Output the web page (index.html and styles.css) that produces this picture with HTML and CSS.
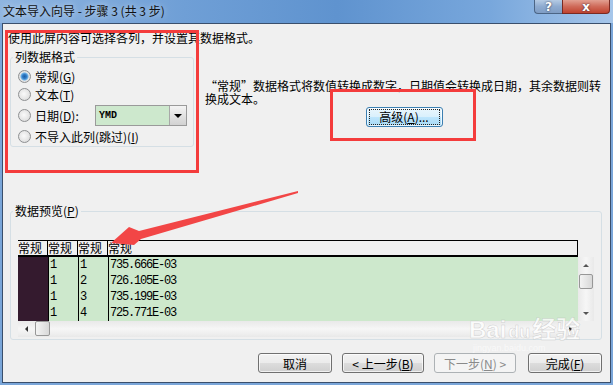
FILE: index.html
```html
<!DOCTYPE html>
<html lang="zh-CN">
<head>
<meta charset="UTF-8">
<title>文本导入向导 - 步骤 3 (共 3 步)</title>
<link rel="stylesheet" href="styles.css">
</head>
<body>
<div class="window">
  <div class="titlebar">
    <span class="title">文本导入向导 - 步骤 3 (共 3 步)</span>
    <div class="caption-btns">
      <span class="cap-help">?</span>
      <span class="cap-close">x</span>
    </div>
  </div>

  <div class="client">
    <p class="intro">使用此屏内容可选择各列，并设置其数据格式。</p>

    <div class="top-row">
      <fieldset class="group format-group">
        <legend>列数据格式</legend>
        <label class="radio-row"><span class="radio checked"></span>常规(<u>G</u>)</label>
        <label class="radio-row"><span class="radio"></span>文本(<u>T</u>)</label>
        <label class="radio-row date-row"><span class="radio"></span>日期(<u>D</u>):
          <span class="combo"><span class="combo-text">YMD</span><span class="combo-btn"><i class="tri-down"></i></span></span>
        </label>
        <label class="radio-row"><span class="radio"></span>不导入此列(跳过)(<u>I</u>)</label>
      </fieldset>

      <div class="desc">
        <p>“常规”数据格式将数值转换成数字，日期值会转换成日期，其余数据则转换成文本。</p>
        <button class="btn btn-focus"><span class="focus-rect">高级(<u>A</u>)...</span></button>
      </div>
    </div>

    <fieldset class="group preview-group">
      <legend>数据预览(<u>P</u>)</legend>
      <div class="grid-head">
        <span>常规</span><span>常规</span><span>常规</span><span>常规</span>
      </div>
      <div class="grid-row">
        <div class="grid-body">
          <span class="sel"></span><span>1</span><span>1</span><span>735.666E-03</span>
          <span class="sel"></span><span>1</span><span>2</span><span>726.105E-03</span>
          <span class="sel"></span><span>1</span><span>3</span><span>735.199E-03</span>
          <span class="sel"></span><span>1</span><span>4</span><span>725.771E-03</span>
        </div>
        <div class="vscroll">
          <span class="sb-arrow"><i class="tri-up"></i></span>
          <span class="thumb"></span>
          <span class="sb-fill"></span>
          <span class="sb-arrow"><i class="tri-down small"></i></span>
        </div>
      </div>
      <div class="hscroll">
        <span class="sb-arrow"><i class="tri-left"></i></span>
        <span class="thumb"></span>
        <span class="sb-fill"></span>
        <span class="sb-arrow"><i class="tri-right"></i></span>
      </div>
    </fieldset>

    <div class="buttons">
      <button class="btn btn-short">取消</button>
      <button class="btn">&lt; 上一步(<u>B</u>)</button>
      <button class="btn" disabled>下一步(<u>N</u>) &gt;</button>
      <button class="btn btn-short btn-last">完成(<u>F</u>)</button>
    </div>

    <!-- annotations drawn over the dialog -->
    <div class="mark mark-format"></div>
    <div class="mark mark-advanced"></div>
    <svg class="arrow" width="607" height="358" viewBox="0 0 607 358">
      <polygon points="295,167 136,207 126,203 108,219 131,221 138,215 295,169" fill="#f24646"/>
    </svg>
    <div class="watermark">Bai<span class="paw">du</span>经验<span class="wm-url">jingyan.baidu.com</span></div>
  </div>
</div>
</body>
</html>
```

FILE: styles.css
```css
body {
  margin: 0;
  font-family: "Noto Sans CJK SC", "DejaVu Sans", sans-serif;
  font-size: 12px;
  color: #000;
}

.window {
  width: 613px;
  height: 385px;
  background-color: #7aa6d9;
  display: flex;
  flex-direction: column;
}

.titlebar {
  height: 23px;
  display: flex;
  justify-content: space-between;
  background: linear-gradient(to right, #8fb5e0, #6f9fd6 30%, #5f93cf 55%, #78a7dc 80%, #a6c6ea);
}

.title {
  padding: 3px 0 0 3px;
  line-height: 16px;
  color: #111;
  text-shadow: 0 0 6px rgba(255, 255, 255, 0.7);
}

.caption-btns {
  display: flex;
  height: 14px;
  margin-right: 3px;
}

.cap-help,
.cap-close {
  display: flex;
  justify-content: center;
  align-items: center;
  color: #fff;
  font-family: "DejaVu Sans", sans-serif;
  font-weight: bold;
  font-size: 12px;
  line-height: 14px;
  border: 1px solid #4b6585;
  border-top: none;
  text-shadow: 0 0 2px #223;
}

.cap-help {
  width: 27px;
  border-right: none;
  border-radius: 0 0 0 4px;
  background: linear-gradient(#b5cbe4, #8eabd0 50%, #7f9dc4);
}

.cap-close {
  width: 46px;
  border-color: #7a2a22;
  border-radius: 0 0 4px 0;
  background: linear-gradient(#e2a092, #cf6a59 50%, #c0432f);
}

.client {
  position: relative;
  flex: 1;
  margin: 0 2px 2px;
  border: 1px solid #3a4f6c;
  background-color: #f0f0f0;
}

.intro {
  margin: 0;
  padding: 7px 0 0 5px;
  line-height: 14px;
}

.top-row {
  display: flex;
  margin-top: 5px;
  padding-left: 7px;
}

.group {
  margin: 0;
  border: 1px solid #d5dfe5;
  border-radius: 3px;
  box-sizing: border-box;
  min-inline-size: 0;
}

.group legend {
  margin-left: -5px;
  padding: 0 2px;
  line-height: 14px;
}

.format-group {
  width: 184px;
  padding: 3px 6px 1px 7px;
}

.radio-row {
  display: flex;
  align-items: center;
  height: 18px;
}

.date-row {
  height: 23px;
  margin-top: 1px;
}

.radio {
  width: 13px;
  height: 13px;
  margin-right: 4px;
  box-sizing: border-box;
  border: 1px solid #8e9092;
  border-radius: 50%;
  background: radial-gradient(circle at 45% 45%, #fafafa, #e4e4e4 60%, #cfcfcf);
}

.radio.checked {
  background: radial-gradient(circle, #1c5fa8 0, #2f7ac4 2px, #6db0e6 3.5px, #e6e6e6 4.5px, #d2d2d2);
}

.combo {
  display: flex;
  margin-left: auto;
  width: 92px;
  height: 21px;
  box-sizing: border-box;
  border: 1px solid #9a9a9a;
  background-color: #cde8cd;
}

.combo-text {
  flex: 1;
  padding-left: 3px;
  font-family: "Liberation Mono", monospace;
  font-size: 10px;
  font-weight: bold;
  line-height: 19px;
}

.combo-btn {
  width: 16px;
  display: flex;
  justify-content: center;
  align-items: center;
  border-left: 1px solid #a8a8a8;
  background: linear-gradient(#f4f4f4, #e2e2e2 50%, #d2d2d2);
}

.tri-down {
  border-left: 4px solid transparent;
  border-right: 4px solid transparent;
  border-top: 4px solid #000;
}

.tri-down.small {
  border-left-width: 3px;
  border-right-width: 3px;
  border-top: 3px solid #555;
}

.tri-up {
  border-left: 3px solid transparent;
  border-right: 3px solid transparent;
  border-bottom: 3px solid #555;
}

.tri-left {
  border-top: 3px solid transparent;
  border-bottom: 3px solid transparent;
  border-right: 3px solid #333;
}

.tri-right {
  border-top: 3px solid transparent;
  border-bottom: 3px solid transparent;
  border-left: 3px solid #333;
}

.desc {
  width: 398px;
  margin: 29px 0 0 11px;
}

.desc p {
  margin: 0;
  line-height: 13px;
}

.btn {
  height: 20px;
  padding: 0;
  font-family: inherit;
  font-size: 12px;
  color: #000;
  border: 1px solid #707070;
  border-radius: 3px;
  background: linear-gradient(#f2f2f2, #ebebeb 50%, #dddddd 50%, #cfcfcf);
  box-shadow: inset 0 0 0 1px rgba(255, 255, 255, 0.7);
}

.btn:disabled {
  color: #8a8a8a;
  border-color: #adb2b5;
  background: #f4f4f4;
  box-shadow: none;
}

.btn-focus {
  display: block;
  width: 77px;
  margin: 2px auto 0;
  border-color: #3c7fb1;
  background: linear-gradient(#eaf6fd, #d9f0fc 50%, #bee6fd 50%, #a7d9f5);
}

.focus-rect {
  display: block;
  margin: 0 3px;
  line-height: 14px;
  outline: 1px dotted #222;
}

.preview-group {
  width: 592px;
  margin: 57px 0 0 7px;
  padding: 22px 7px 2px 7px;
}

.grid-head {
  display: grid;
  grid-template-columns: 30px 30px 30px 1fr;
  width: 560px;
  height: 17px;
  box-sizing: border-box;
  border-top: 1px solid #000;
  border-bottom: 2px solid #000;
  border-right: 1px solid #000;
}

.grid-head span {
  line-height: 14px;
  border-right: 1px solid #000;
}

.grid-head span:last-child {
  border-right: none;
}

.grid-row {
  display: flex;
}

.grid-body {
  display: grid;
  grid-template-columns: 30px 30px 30px 1fr;
  grid-auto-rows: 16px;
  width: 560px;
  background-color: #cde8cc;
  font-family: "Liberation Mono", monospace;
  font-size: 12px;
  letter-spacing: -1.2px;
}

.grid-body span {
  padding-left: 1px;
  line-height: 16px;
  border-left: 1px solid #000;
}

.grid-body .sel {
  border-left: none;
  background-color: #341a2e;
}

.vscroll {
  width: 16px;
  display: flex;
  flex-direction: column;
  background: linear-gradient(to right, #e9e9e9, #f6f6f6 50%, #e9e9e9);
}

.hscroll {
  width: 560px;
  height: 16px;
  display: flex;
  background: linear-gradient(#e9e9e9, #f6f6f6 50%, #e9e9e9);
}

.sb-arrow {
  width: 16px;
  height: 16px;
  display: flex;
  justify-content: center;
  align-items: center;
}

.sb-fill {
  flex: 1;
}

.vscroll .thumb {
  height: 15px;
  margin: 1px 1px 0;
}

.hscroll .thumb {
  width: 15px;
  margin: 0 0 1px 1px;
}

.thumb {
  box-sizing: border-box;
  border: 1px solid #979797;
  border-radius: 2px;
  background: linear-gradient(to right, #f3f3f3, #e6e6e6 50%, #d8d8d8);
}

.buttons {
  display: flex;
  justify-content: flex-end;
  gap: 10px;
  margin-top: 13px;
  padding-right: 8px;
}

.buttons .btn {
  width: 82px;
}

.buttons .btn-short {
  width: 74px;
}

.buttons .btn-last {
  margin-left: 2px;
}

.mark {
  position: absolute;
  border: 3px solid #f43c3c;
  box-sizing: border-box;
}

.mark-format {
  left: 2px;
  top: 6px;
  width: 194px;
  height: 143px;
}

.mark-advanced {
  left: 327px;
  top: 65px;
  width: 146px;
  height: 52px;
}

.arrow {
  position: absolute;
  left: 0;
  top: 0;
  pointer-events: none;
}

.watermark {
  position: absolute;
  left: 466px;
  top: 292px;
  font-family: "Liberation Sans", "Noto Sans CJK SC", sans-serif;
  font-size: 24px;
  font-weight: bold;
  line-height: 28px;
  color: rgba(255, 255, 255, 0.75);
  -webkit-text-stroke: 0.5px rgba(160, 160, 160, 0.45);
  pointer-events: none;
}

.paw {
  margin: 0 2px;
  font-size: 18px;
}

.wm-url {
  display: block;
  margin: -3px 0 0 4px;
  font-size: 9px;
  line-height: 10px;
  font-weight: normal;
  color: rgba(255, 255, 255, 0.6);
  -webkit-text-stroke: 0;
}
```
